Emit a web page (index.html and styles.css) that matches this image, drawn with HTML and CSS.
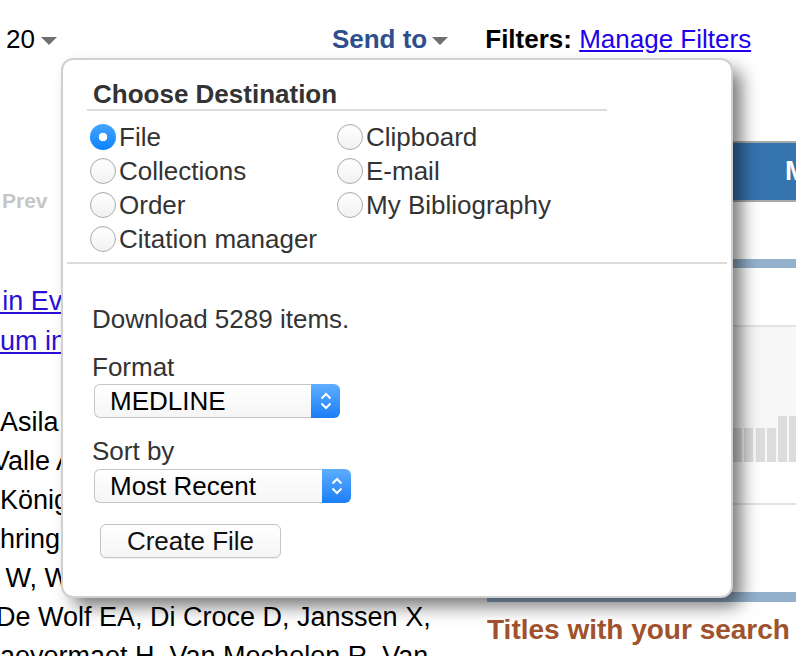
FILE: index.html
```html
<!DOCTYPE html>
<html lang="en">
<head>
<meta charset="utf-8">
<title>Send to – Choose Destination</title>
<link rel="stylesheet" href="styles.css">
</head>
<body>
<div class="page">
  <header class="topbar">
    <span class="perpage">20<span class="caret"></span></span>
    <span class="sendto">Send to<span class="caret"></span></span>
    <span class="filters"><b>Filters:</b> <a href="#">Manage Filters</a></span>
  </header>

  <div class="main">
    <div class="results">
      <div class="pager">Prev</div>
      <div class="titles">
        <div><a href="#">&#8202;in Ev</a></div>
        <div><a href="#">um in</a></div>
      </div>
      <div class="authors">
        <div>Asila V,</div>
        <div class="shift-more">Valle A,</div>
        <div>König R,</div>
        <div>hring K,</div>
        <div>&#8201;W, W,</div>
        <div class="shift">De Wolf EA, Di Croce D, Janssen X,</div>
        <div>aeyermaet H, Van Mechelen R, Van</div>
      </div>
    </div>

    <aside class="side">
      <div class="tabbar">My NCBI</div>
      <div class="boxhead"></div>
      <div class="rule"></div>
      <div class="chart">
        <span class="bar" style="height:20px"></span>
        <span class="bar" style="height:22px"></span>
        <span class="bar" style="height:24px"></span>
        <span class="bar" style="height:23px"></span>
        <span class="bar" style="height:26px"></span>
        <span class="bar" style="height:25px"></span>
        <span class="bar" style="height:27px"></span>
        <span class="bar" style="height:28px"></span>
        <span class="bar" style="height:27px"></span>
        <span class="bar" style="height:29px"></span>
        <span class="bar" style="height:30px"></span>
        <span class="bar" style="height:29px"></span>
        <span class="bar" style="height:31px"></span>
        <span class="bar" style="height:30px"></span>
        <span class="bar" style="height:32px"></span>
        <span class="bar" style="height:31px"></span>
        <span class="bar" style="height:33px"></span>
        <span class="bar" style="height:32px"></span>
        <span class="bar" style="height:33px"></span>
        <span class="bar" style="height:34px"></span>
        <span class="bar" style="height:33px"></span>
        <span class="bar" style="height:34px"></span>
        <span class="bar" style="height:34px"></span>
        <span class="bar" style="height:34px"></span>
        <span class="bar" style="height:34px"></span>
        <span class="bar" style="height:34px"></span>
        <span class="bar" style="height:46px"></span>
        <span class="bar" style="height:46px"></span>
      </div>
      <div class="rule rule-low"></div>
      <div class="boxhead boxhead-low"></div>
      <div class="side-title">Titles with your search</div>
    </aside>
  </div>

  <div class="popup">
    <div class="dest-title">Choose Destination</div>
    <div class="dest-grid">
      <label class="opt"><input class="radio" type="radio" name="dest" checked>File</label>
      <label class="opt"><input class="radio" type="radio" name="dest">Clipboard</label>
      <label class="opt"><input class="radio" type="radio" name="dest">Collections</label>
      <label class="opt"><input class="radio" type="radio" name="dest">E-mail</label>
      <label class="opt"><input class="radio" type="radio" name="dest">Order</label>
      <label class="opt"><input class="radio" type="radio" name="dest">My Bibliography</label>
      <label class="opt"><input class="radio" type="radio" name="dest">Citation manager</label>
    </div>
    <div class="divider"></div>
    <div class="download">
      <div class="dl-count">Download 5289 items.</div>
      <div class="label">Format</div>
      <div class="select select-format">
        <span class="select-value">MEDLINE</span>
        <span class="select-arrow"><svg width="12" height="20" viewBox="0 0 12 20"><polyline points="1.5,7.5 6,3 10.5,7.5" fill="none" stroke="#fff" stroke-width="2"/><polyline points="1.5,12.5 6,17 10.5,12.5" fill="none" stroke="#fff" stroke-width="2"/></svg></span>
      </div>
      <div class="label">Sort by</div>
      <div class="select select-sort">
        <span class="select-value">Most Recent</span>
        <span class="select-arrow"><svg width="12" height="20" viewBox="0 0 12 20"><polyline points="1.5,7.5 6,3 10.5,7.5" fill="none" stroke="#fff" stroke-width="2"/><polyline points="1.5,12.5 6,17 10.5,12.5" fill="none" stroke="#fff" stroke-width="2"/></svg></span>
      </div>
      <button class="btn" type="button">Create File</button>
    </div>
  </div>
</div>
</body>
</html>
```
FILE: styles.css
```css
html, body {
  margin: 0;
  padding: 0;
  background: #fff;
}

body {
  font-family: "Liberation Sans", Arial, Helvetica, sans-serif;
  color: #000;
}

.page {
  position: relative;
  width: 796px;
  height: 656px;
  overflow: hidden;
}

/* ---------- top bar ---------- */
.topbar {
  display: flex;
  align-items: baseline;
  height: 30px;
  padding: 24px 0 0 6px;
  font-size: 26px;
  line-height: 30px;
  white-space: nowrap;
}

.caret {
  display: inline-block;
  width: 0;
  height: 0;
  border-left: 8px solid transparent;
  border-right: 8px solid transparent;
  border-top: 8px solid #6f6f6f;
  margin-bottom: 3px;
}

.perpage .caret {
  margin-left: 6px;
}

.sendto {
  margin-left: 275px;
  color: #2e4e8e;
  font-weight: bold;
}

.sendto .caret {
  margin-left: 5px;
}

.filters {
  margin-left: 37px;
}

.filters a {
  color: #2200ee;
}

/* ---------- main content ---------- */
.main {
  display: grid;
  grid-template-columns: 487px 309px;
}

.results {
  min-width: 0;
  font-size: 27px;
  line-height: 40px;
  white-space: nowrap;
}

.pager {
  margin-top: 135px;
  padding-left: 2px;
  font-size: 21px;
  line-height: 24px;
  font-weight: bold;
  color: #c6c6c6;
}

.titles {
  margin-top: 68px;
  line-height: 40px;
}

.titles a {
  color: #2a10d6;
}

.authors {
  margin-top: 42px;
  line-height: 39px;
}

.shift {
  margin-left: -4px;
}

.shift-more {
  margin-left: -8px;
}

/* ---------- side column ---------- */
.side {
  min-width: 0;
}

.tabbar {
  margin-top: 87px;
  height: 57px;
  border-top: 2px solid #a9a9a9;
  border-bottom: 2px solid #a9a9a9;
  background: #3574af;
  color: #fff;
  font-size: 27px;
  font-weight: bold;
  line-height: 57px;
  padding-left: 298px;
  white-space: nowrap;
  overflow: hidden;
}

.boxhead {
  margin-top: 57px;
  height: 9px;
  background: #93b0cc;
}

.boxhead-low {
  margin-top: 87px;
  height: 10px;
}

.rule {
  margin-top: 57px;
  height: 2px;
  background: #e3e3e3;
}

.rule-low {
  margin-top: 41px;
}

.chart {
  display: flex;
  align-items: flex-end;
  gap: 2.2px;
  height: 135px;
  background: #f7f7f7;
  overflow: hidden;
}

.bar {
  flex: none;
  width: 9px;
  background: #dcdcdc;
}

.side-title {
  margin-top: 11px;
  font-size: 28px;
  line-height: 34px;
  font-weight: bold;
  color: #a0522d;
  white-space: nowrap;
}

/* ---------- popup ---------- */
.popup {
  position: absolute;
  left: 61px;
  top: 58px;
  width: 660px;
  padding: 19px 4px 38px;
  border: 2px solid #d0d0d0;
  border-radius: 12px;
  background: #fff;
  box-shadow: 10px 10px 18px -2px rgba(0, 0, 0, 0.55);
  color: #333;
  font-size: 26px;
  line-height: 30px;
}

.dest-title {
  margin-left: 20px;
  width: 514px;
  padding-left: 6px;
  font-weight: bold;
  border-bottom: 2px solid #dcdcdc;
}

.dest-grid {
  display: grid;
  grid-template-columns: 247px auto;
  grid-auto-rows: 34px;
  margin: 9px 0 0 23px;
}

.opt {
  display: flex;
  align-items: center;
  gap: 3px;
  white-space: nowrap;
}

.radio {
  appearance: none;
  -webkit-appearance: none;
  flex: none;
  box-sizing: border-box;
  width: 26px;
  height: 26px;
  margin: 0;
  border: 1px solid #adadad;
  border-radius: 50%;
  background: linear-gradient(#ffffff, #f1f1f1);
  box-shadow: inset 0 1px 1px rgba(0, 0, 0, 0.05);
}

.radio:checked {
  border: none;
  background:
    radial-gradient(circle, #fff 0 4px, rgba(255, 255, 255, 0) 4.6px),
    linear-gradient(#46a4ff, #0b83fb);
  box-shadow: none;
}

.divider {
  margin-top: 6px;
  height: 2px;
  background: #dcdcdc;
}

.download {
  padding-left: 25px;
}

.dl-count {
  margin-top: 40px;
}

.label {
  margin-top: 18px;
}

.select {
  display: flex;
  height: 34px;
  margin: 2px 0 0 2px;
  color: #000;
}

.select-format {
  width: 246px;
}

.select-sort {
  width: 257px;
  margin-top: 3px;
}

.select-value {
  flex: 1;
  box-sizing: border-box;
  padding-left: 15px;
  border: 1px solid #c6c6c6;
  border-right: none;
  border-radius: 6px 0 0 6px;
  background: linear-gradient(#ffffff, #f5f5f5);
  line-height: 32px;
  white-space: nowrap;
}

.select-arrow {
  flex: none;
  width: 29px;
  display: flex;
  align-items: center;
  justify-content: center;
  border-radius: 0 6px 6px 0;
  background: linear-gradient(#5eaefe, #1a7ef8);
}

.btn {
  display: block;
  box-sizing: border-box;
  width: 181px;
  height: 34px;
  margin: 21px 0 0 8px;
  padding: 0;
  border: 1px solid #c4c4c4;
  border-radius: 6px;
  background: linear-gradient(#ffffff, #f5f5f5);
  box-shadow: 0 1px 1px rgba(0, 0, 0, 0.06);
  color: #111;
  font: inherit;
  line-height: 32px;
  text-align: center;
}
```
